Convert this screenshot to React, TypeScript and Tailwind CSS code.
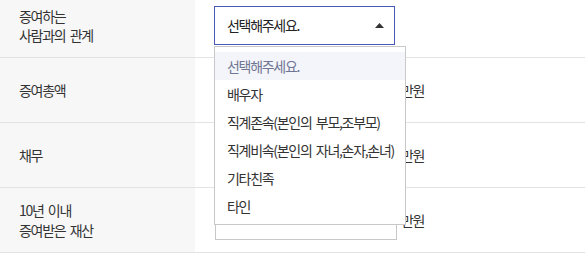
const font = { fontFamily: '"Noto Sans CJK KR", "Noto Sans", sans-serif' };

const options = [
  "선택해주세요.",
  "배우자",
  "직계존속(본인의 부모,조부모)",
  "직계비속(본인의 자녀,손자,손녀)",
  "기타친족",
  "타인",
];

function AmountRow({ label, lines }: { label?: string; lines?: string[] }) {
  return (
    <div className="flex h-[65px] border-b border-[#e3e3e3]">
      <div className="w-[195px] shrink-0 bg-[#f7f7f7] pl-[19px] flex flex-col justify-center text-[#333]">
        {lines ? (
          lines.map((l) => (
            <span key={l} className="block h-[20px] leading-[20px]">
              {l}
            </span>
          ))
        ) : (
          <span>{label}</span>
        )}
      </div>
      <div className="flex items-center pl-[20px]">
        <div className="w-[182px] h-[40px] border border-[#c8c8c8] bg-white" />
        <span className="ml-[4px] text-[#333]">만원</span>
      </div>
    </div>
  );
}

export default function App() {
  return (
    <div
      className="relative w-[585px] h-[256px] bg-white overflow-hidden text-[14px] tracking-[-1.3px] [word-spacing:2.5px]"
      style={font}
    >
      <div className="flex h-[58px] border-b border-[#e3e3e3]">
        <div className="w-[195px] shrink-0 bg-[#f7f7f7] pl-[19px] pt-[7px] flex flex-col text-[#333]">
          <span className="block h-[19px] leading-[19px]">증여하는</span>
          <span className="block h-[19px] leading-[19px]">사람과의 관계</span>
        </div>
        <div className="pl-[19px] pt-[6px]">
          <div className="w-[181px] h-[39px] border border-[#4b59b6] bg-white flex items-center justify-between pl-[12px] pr-[10px] text-[#222]">
            <span>선택해주세요.</span>
            <svg width="9" height="5" viewBox="0 0 9 5">
              <path d="M0 5 L4.5 0 L9 5 Z" fill="#333" />
            </svg>
          </div>
        </div>
      </div>
      <AmountRow label="증여총액" />
      <AmountRow label="채무" />
      <AmountRow lines={["10년 이내", "증여받은 재산"]} />

      <ul className="absolute left-[214px] top-[46px] w-[192px] border border-[#c8c8c8] bg-white pt-[5px] pb-[4px]">
        {options.map((o, i) => (
          <li
            key={o}
            className={`h-[28px] flex items-center pl-[12px] ${
              i === 0 ? "bg-[#f4f5fa] text-[#6f7593]" : "text-[#333]"
            }`}
          >
            {o}
          </li>
        ))}
      </ul>
    </div>
  );
}
